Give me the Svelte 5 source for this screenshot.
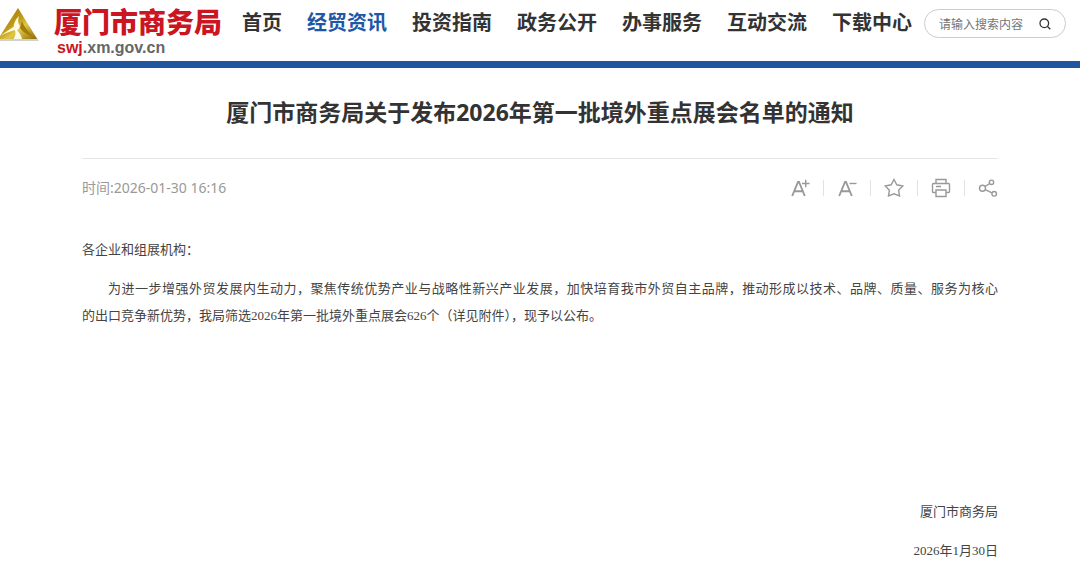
<script>
  const nav = ['首页', '经贸资讯', '投资指南', '政务公开', '办事服务', '互动交流', '下载中心'];
  const current = '经贸资讯';
</script>

<header>
  <a class="brand" href="#home">
    <svg class="emblem" viewBox="0 0 40 36" aria-hidden="true">
      <defs>
        <linearGradient id="gold" x1="0" y1="0" x2="1" y2="1">
          <stop offset="0" stop-color="#8f6c08" />
          <stop offset="0.45" stop-color="#c09a14" />
          <stop offset="0.62" stop-color="#e0c848" />
          <stop offset="1" stop-color="#8f6a04" />
        </linearGradient>
      </defs>
      <path d="M18 2 39 34H-2Z" fill="#d0d0cc" />
      <path d="M18 1 37 32H-2Z" fill="url(#gold)" />
      <path d="M19 9Q14 14 13.500 20Q7 24 0 29Q8 25 14.500 23Q17 26 13.500 32H22Q21 27 17 23.500Q19 22 20 19Q17 16 19 9Z" fill="#fffbe8" />
      <path d="M22 14Q24 21 35 31Q23 26 20 21Z" fill="#a37d0a" />
    </svg>
    <span class="names">
      <strong>厦门市商务局</strong>
      <span class="domain"><b>swj</b>.xm.gov.cn</span>
    </span>
  </a>
  <nav>
    {#each nav as item}
      <a href="#{item}" class:active={item === current}>{item}</a>
    {/each}
  </nav>
  <form class="search" role="search" onsubmit={(e) => e.preventDefault()}>
    <input type="text" placeholder="请输入搜索内容" aria-label="请输入搜索内容" />
    <button type="submit" aria-label="搜索">
      <svg viewBox="0 0 12 12"><circle cx="5.3" cy="5.3" r="4.3" /><path d="M8.5 8.5 11.3 11.3" /></svg>
    </button>
  </form>
</header>

<main>
  <h1>厦门市商务局关于发布2026年第一批境外重点展会名单的通知</h1>
  <div class="meta">
    <span>时间:2026-01-30 16:16</span>
    <div class="tools">
      <button type="button" aria-label="放大字体">
        <svg viewBox="0 0 20 20"><path class="thick" d="M2.200 18 8 4H9L14.800 18M4.500 13.200H12.500" /><path d="M12 5.500H19.500M15.700 1.800V9.200" /></svg>
      </button>
      <button type="button" aria-label="缩小字体">
        <svg viewBox="0 0 20 20"><path class="thick" d="M2.200 18 8 4H9L14.800 18M4.500 13.200H12.500" /><path d="M12.500 5.500H19.500" /></svg>
      </button>
      <button type="button" aria-label="收藏">
        <svg viewBox="0 0 20 20"><path d="M10 1.500 12.800 6.800 18.800 8 14.600 12.200 15.500 18 10 15.800 4.500 18 5.400 12.200 1.200 8 7.200 6.800Z" /></svg>
      </button>
      <button type="button" aria-label="打印">
        <svg viewBox="0 0 20 20"><path d="M5 5.500V1.500H15V5.500M5 14.500H2.500Q1.500 14.500 1.500 13.500V6.500Q1.500 5.500 2.500 5.500H17.500Q18.500 5.500 18.500 6.500V13.500Q18.500 14.500 17.500 14.500H15M5 12H15V18.500H5ZM5 8.500H10" /></svg>
      </button>
      <button type="button" aria-label="分享">
        <svg viewBox="0 0 20 20"><circle cx="4.5" cy="10.3" r="3" /><circle cx="13.5" cy="4.3" r="2.2" /><circle cx="16.2" cy="15.8" r="2.3" /><path d="M7 8.600 11.600 5.500M7.200 11.600 14 14.800" /></svg>
      </button>
    </div>
  </div>

  <article>
    <p>各企业和组展机构：</p>
    <p class="indent">
      <span class="full">为进一步增强外贸发展内生动力，聚焦传统优势产业与战略性新兴产业发展，加快培育我市外贸自主品牌，推动形成以技术、品牌、质量、服务为核心</span>
      <span>的出口竞争新优势，我局筛选2026年第一批境外重点展会626个（详见附件），现予以公布。</span>
    </p>
    <footer>
      <p>厦门市商务局</p>
      <p>2026年1月30日</p>
    </footer>
  </article>
</main>

<style>
  :global(body) {
    margin: 0;
    background: #fff;
    color: #333;
    font-family: "Noto Sans", "Noto Sans CJK SC", sans-serif;
  }
  a { color: inherit; text-decoration: none; }
  button { padding: 0; border: 0; background: none; display: flex; cursor: pointer; }
  svg { display: block; fill: none; }
  header {
    display: flex;
    align-items: flex-start;
    height: 61px;
    border-bottom: 7px solid #2256a0;
  }
  .brand { display: flex; flex: none; gap: 14px; width: 242px; }
  .emblem { width: 40px; height: 36px; margin-top: 7px; }
  .names { display: flex; flex-direction: column; }
  .names strong {
    font: 900 28px/34px "Noto Sans CJK SC", sans-serif;
    color: #cb1522;
    margin-top: 4px;
  }
  .domain {
    font: bold 16px/20px "Liberation Sans", sans-serif;
    color: #666;
    padding-left: 3px;
  }
  .domain b { color: #cb1522; }
  nav { display: flex; flex: none; gap: 25px; padding-top: 8px; }
  nav a { font: bold 20px/28px "Noto Sans CJK SC", sans-serif; white-space: nowrap; }
  nav .active { color: #1f57a7; }
  .search {
    display: flex;
    align-items: center;
    flex: 1;
    min-width: 0;
    height: 29px;
    box-sizing: border-box;
    margin: 9px 14px 0 12px;
    padding: 0 14px;
    border: 1px solid #ccc;
    border-radius: 15px;
  }
  input {
    flex: 1;
    min-width: 0;
    padding: 0;
    border: 0;
    outline: 0;
    background: none;
    font: 12px/20px "Noto Sans CJK SC", sans-serif;
  }
  input::placeholder { color: #757575; opacity: 1; }
  .search svg { width: 12px; height: 12px; stroke: #333; stroke-width: 1.3; }
  main { padding: 0 82px; }
  h1 {
    margin: 0;
    padding: 27px 0 28px;
    text-align: center;
    font-size: 23px;
    line-height: 35px;
    border-bottom: 1px solid #e6e6e6;
  }
  .meta {
    display: flex;
    justify-content: space-between;
    align-items: center;
    padding-top: 17px;
    font-size: 14px;
    line-height: 24px;
    color: #999;
  }
  .tools { display: flex; }
  .tools button { height: 16px; align-items: center; }
  .tools button + button { margin-left: 13px; padding-left: 13px; border-left: 1px solid #e2e2e2; }
  .tools svg { width: 20px; height: 20px; stroke: #999; stroke-width: 1.4; }
  .tools .thick { stroke-width: 1.9; }
  article {
    padding-top: 36px;
    font-family: "Liberation Serif", "Noto Sans CJK SC", serif;
    font-size: 13px;
    line-height: 27px;
    color: #444;
  }
  p { margin: 0 0 12px; }
  .indent span { display: block; }
  .indent .full { text-indent: 2em; text-align: justify; text-align-last: justify; }
  footer { padding-top: 157px; text-align: right; }
</style>
